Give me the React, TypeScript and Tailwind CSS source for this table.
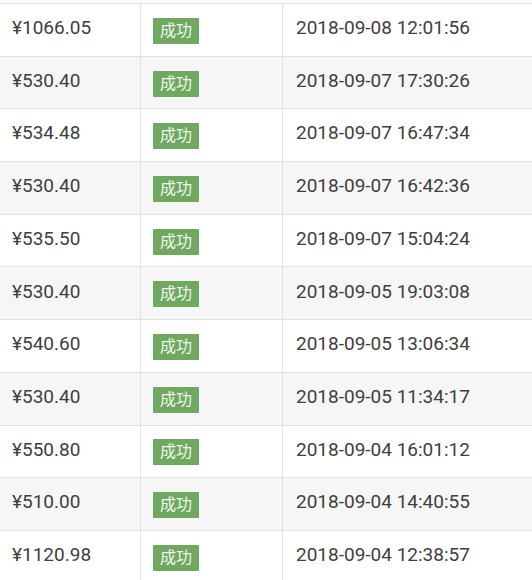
import React from "react";

const rows = [
  { amount: "¥1066.05", time: "2018-09-08 12:01:56" },
  { amount: "¥530.40", time: "2018-09-07 17:30:26" },
  { amount: "¥534.48", time: "2018-09-07 16:47:34" },
  { amount: "¥530.40", time: "2018-09-07 16:42:36" },
  { amount: "¥535.50", time: "2018-09-07 15:04:24" },
  { amount: "¥530.40", time: "2018-09-05 19:03:08" },
  { amount: "¥540.60", time: "2018-09-05 13:06:34" },
  { amount: "¥530.40", time: "2018-09-05 11:34:17" },
  { amount: "¥550.80", time: "2018-09-04 16:01:12" },
  { amount: "¥510.00", time: "2018-09-04 14:40:55" },
  { amount: "¥1120.98", time: "2018-09-04 12:38:57" },
];

const App: React.FC = () => {
  return (
    <div
      className="w-[532px] h-[580px] overflow-hidden bg-white text-[#404040]"
      style={{ fontFamily: "Roboto, 'Noto Sans CJK SC', sans-serif" }}
    >
      <div className="h-[3px] bg-[#fafafa]" />
      <div className="border-t border-[#e2e2e2]">
        {rows.map((row, i) => (
          <div
            key={i}
            className={
              "grid grid-cols-[141px_142px_1fr] h-[52.7px] border-b border-[#e2e2e2] " +
              (i % 2 === 1 ? "bg-[#f6f6f6]" : "bg-white")
            }
          >
            <div className="flex items-center pl-3 pb-[3px] text-[19px] border-r border-[#e2e2e2]">
              {row.amount}
            </div>
            <div className="flex items-center pl-3 pt-[2px] border-r border-[#e2e2e2]">
              <span className="bg-[#70a862] text-[#eef7ea] text-[16px] leading-[26px] px-[7px] rounded-[1px]">
                成功
              </span>
            </div>
            <div className="flex items-center pl-[13px] pb-[3px] text-[19px]">
              {row.time}
            </div>
          </div>
        ))}
      </div>
    </div>
  );
};

export default App;
